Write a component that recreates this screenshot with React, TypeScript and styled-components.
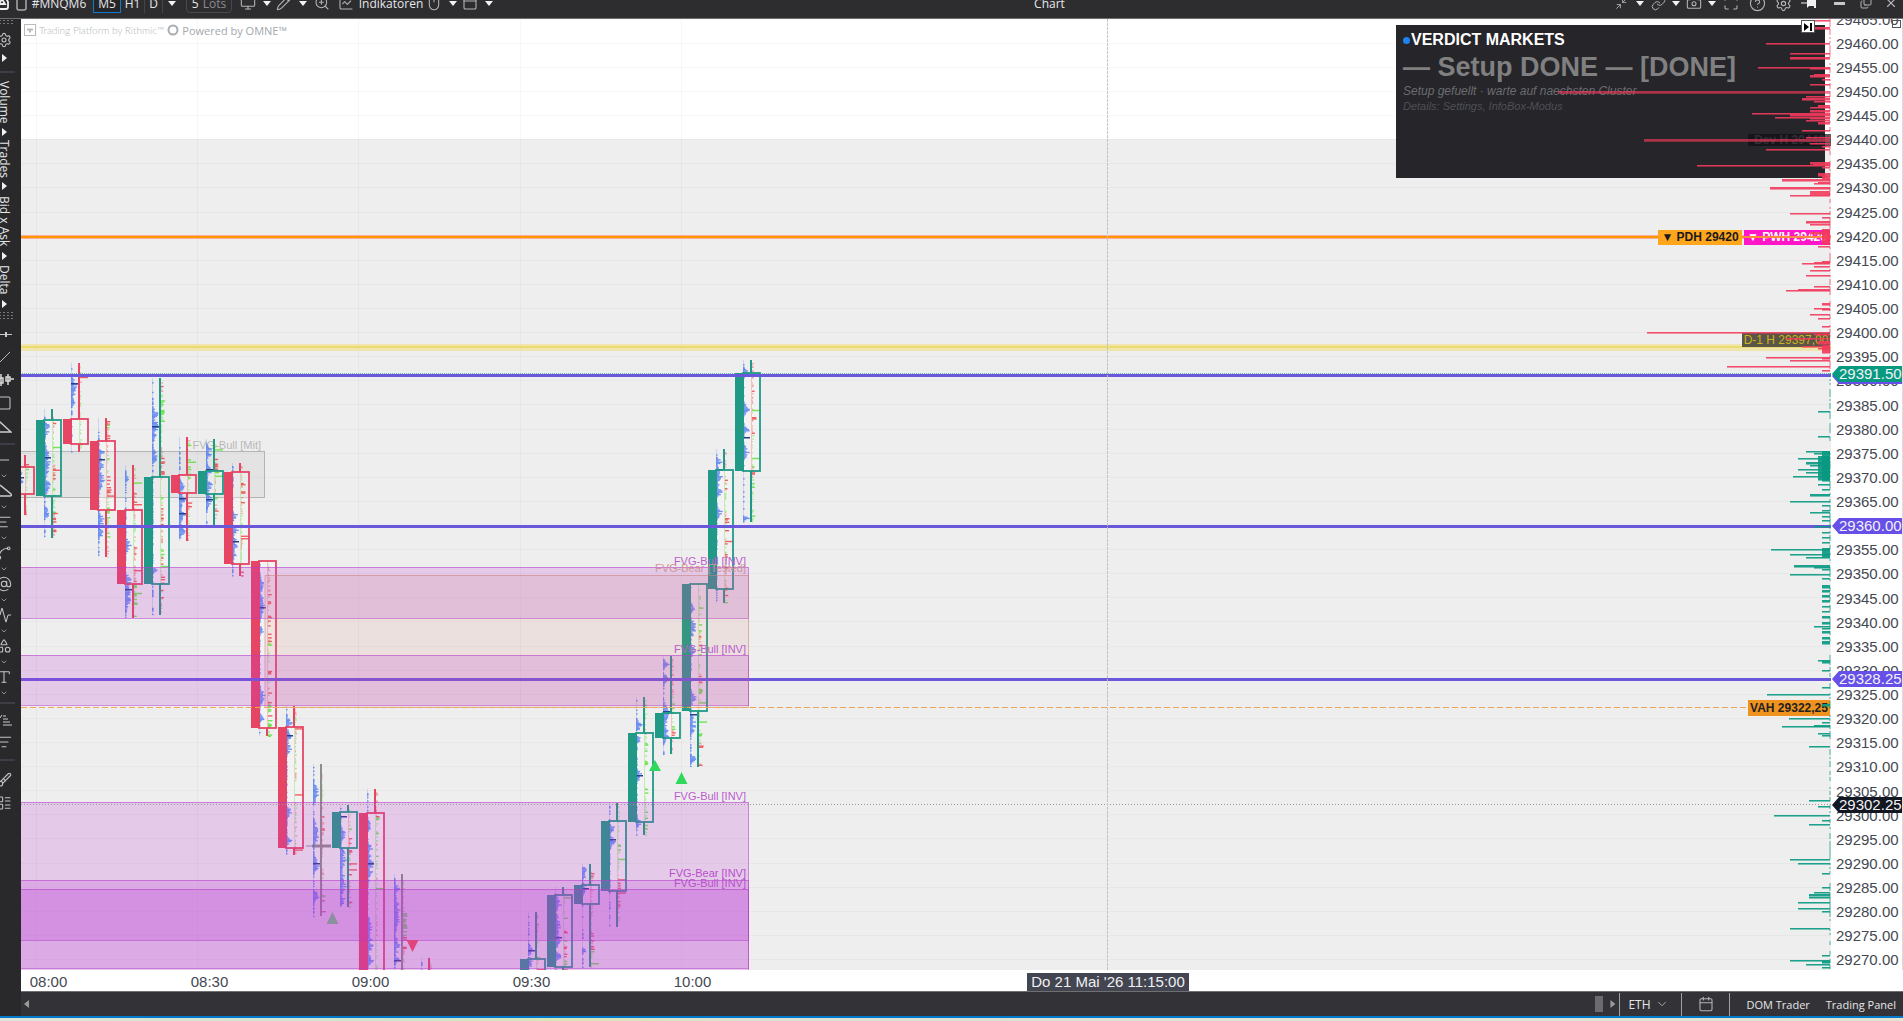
import React from 'react';
import styled, { createGlobalStyle } from 'styled-components';
import {
  Monitor, Pencil, ZoomIn, ChartLine, Mouse, PanelTop, Minimize2, Link, Camera, Maximize,
  CircleHelp, Settings, Minus, Copy, X, Calendar, ChevronDown, Square, Triangle, Type,
  Shapes, AlignLeft, Spline, AtSign, Slash, Activity, ListFilter, Brush, LayoutList,
} from 'lucide-react';

const ui = '"Open Sans", "Noto Sans", sans-serif';
const chartFont = '"Liberation Sans", Arial, sans-serif';

const Global = createGlobalStyle`
  * { box-sizing: border-box; }
  body { margin: 0; overflow: hidden; background: #2d2d30; }
  button { font: inherit; color: inherit; background: none; border: 0; padding: 0; }
`;

const Shell = styled.div`
  display: grid;
  grid-template-rows: 19px minmax(0, 1fr) 5px;
  height: 100vh;
  font-family: ${ui};
  font-size: 11px;
  color: #e6e6e8;
  background: #2d2d30;
`;

/* ---------- top bar ---------- */
const TopBar = styled.header`
  overflow: hidden;
  border-bottom: 1px solid #6f6f72;
  background: #2d2d30;
`;
const TopRow = styled.div`
  display: flex;
  align-items: center;
  height: 26px;
  margin-top: -10px;
  svg { color: #b4b4b6; }
`;
const Slot = styled.button<{ $w: number; $line?: boolean }>`
  display: flex;
  align-items: center;
  justify-content: center;
  flex: none;
  width: ${(p) => p.$w}px;
  height: 20px;
  white-space: nowrap;
  font-size: 12px;
  border-right: ${(p) => (p.$line ? '1px solid #45454a' : '0')};
`;
const ActiveSlot = styled(Slot)`
  margin-left: 4px;
  border: 1px solid #0a7bd0;
  background: #252528;
`;
const LotsSlot = styled(Slot)`
  margin: 0 4px 0 5px;
  border: 1px solid #48484e;
  border-radius: 4px;
  span { color: #8a8a8e; margin-left: 4px; }
`;
const Title = styled.div`
  flex: 1;
  padding-right: 10px;
  text-align: center;
  font-size: 12px;
`;
const Down = styled.i`
  border: 4px solid transparent;
  border-top: 5px solid #f2f2f2;
  border-bottom: 0;
`;

/* ---------- side bar ---------- */
const Body = styled.div`
  display: grid;
  grid-template-columns: 21px minmax(0, 1fr);
  min-height: 0;
`;
const Side = styled.nav`
  overflow: hidden;
  background: #29292c;
`;
const SideInner = styled.div`
  display: flex;
  flex-direction: column;
  width: 36px;
  margin-left: -14px;
`;
const SideSlot = styled.button<{ $h: number }>`
  display: flex;
  align-items: center;
  justify-content: center;
  flex: none;
  height: ${(p) => p.$h}px;
  svg { color: #c4c4c6; }
`;
const SideText = styled(SideSlot)`
  writing-mode: vertical-rl;
  width: 36px;
  font-size: 12px;
  line-height: 16px;
`;
const SideLine = styled.div<{ $h: number }>`
  display: flex;
  align-items: center;
  flex: none;
  height: ${(p) => p.$h}px;
  &::after { content: ''; width: 29px; height: 2px; background: #3d3d46; }
`;
const Dots = styled.div<{ $h: number }>`
  flex: none;
  height: ${(p) => p.$h}px;
  width: 27px;
  background-image: radial-gradient(circle, #77777a 1px, transparent 1px);
  background-size: 4px 3px;
  background-clip: content-box;
  padding: 1px 0 2px;
`;
const RightTri = styled.i`
  border: 4px solid transparent;
  border-left: 5px solid #f2f2f2;
  border-right: 0;
`;

/* ---------- chart ---------- */
const Work = styled.main`
  display: grid;
  grid-template-columns: minmax(0, 1fr) 72px;
  grid-template-rows: minmax(0, 1fr) 21px 25px;
  min-height: 0;
  background: #fff;
  font-family: ${chartFont};
`;
const Plot = styled.section`
  position: relative;
  overflow: hidden;
  background: linear-gradient(#fff 120px, #eee 120px);
`;
const Canvas = styled.svg`
  position: absolute;
  inset: 0;
  width: 100%;
  height: 100%;
  text { font-family: ${chartFont}; font-size: 11px; }
`;
const RightCanvas = styled.svg`
  position: absolute;
  top: 0;
  right: 0;
  width: 300px;
  height: 100%;
`;
const Watermark = styled.div`
  position: absolute;
  top: 3px;
  left: 3px;
  display: flex;
  align-items: center;
  gap: 3px;
  height: 16px;
  font-size: 10px;
  color: #b3b5b8;
  font-family: Inter, sans-serif;
  font-weight: 300;
`;
const Rithmic = styled.span`
  font-family: Lato, sans-serif;
`;
const Powered = styled.span`
  font-family: ${ui};
  font-weight: 400;
  font-size: 11px;
  color: #a3a8ad;
`;
const InfoBox = styled.aside`
  position: absolute;
  top: 6px;
  right: 6px;
  width: 429px;
  height: 153px;
  padding: 5px 7px;
  background: #25252a;
`;
const InfoTitle = styled.h2`
  display: flex;
  align-items: center;
  gap: 1px;
  margin: 0;
  font-size: 16px;
  line-height: 20px;
  color: #fff;
  &::before { content: ''; width: 7px; height: 7px; border-radius: 50%; background: #1e82f0; }
`;
const InfoState = styled.div`
  font-size: 27px;
  line-height: 34px;
  font-weight: 700;
  white-space: nowrap;
  color: #808080;
`;
const InfoNote = styled.div<{ $small?: boolean }>`
  font-style: italic;
  font-size: ${(p) => (p.$small ? 11 : 12)}px;
  line-height: 15px;
  color: ${(p) => (p.$small ? '#505055' : '#6c6c70')};
`;
const Tag = styled.div<{ $top: number; $right: number; $w: number; $bg: string; $fg: string; $plain?: boolean; $h?: number }>`
  position: absolute;
  top: ${(p) => p.$top}px;
  right: ${(p) => p.$right}px;
  width: ${(p) => p.$w}px;
  height: ${(p) => p.$h || 15}px;
  line-height: ${(p) => p.$h || 15}px;
  text-align: center;
  white-space: nowrap;
  font-size: 12px;
  font-weight: ${(p) => (p.$plain ? 400 : 700)};
  background: ${(p) => p.$bg};
  color: ${(p) => p.$fg};
`;
const SkipButton = styled.button`
  position: absolute;
  top: 1px;
  right: 16px;
  display: flex;
  width: 14px;
  height: 13px;
  align-items: center;
  justify-content: center;
  border: 1px solid #555;
  background: #fff;
`;
const Axis = styled.div`
  position: relative;
  display: flex;
  flex-direction: column;
  overflow: hidden;
  border-right: 1px solid #ddd;
  color: #444852;
`;
const AxisRows = styled.div`
  display: flex;
  flex: 1;
  flex-direction: column;
  margin: -12px 0 -2px;
`;
const Price = styled.div`
  display: flex;
  flex: 1;
  align-items: center;
  padding-left: 5px;
  font-size: 15px;
`;
const PriceTag = styled.div<{ $bg: string }>`
  position: absolute;
  left: 1px;
  width: 70px;
  height: 16px;
  padding-left: 7px;
  font-size: 15px;
  line-height: 16px;
  color: #f2f2f4;
  background: ${(p) => p.$bg};
  clip-path: polygon(0 50%, 7px 0, 100% 0, 100% 100%, 7px 100%);
`;
const AxisButton = styled.button`
  position: absolute;
  top: 1px;
  right: 1px;
  width: 9px;
  height: 8px;
  border: 1px solid #555;
`;
const TimeAxis = styled.div`
  position: relative;
  grid-column: 1 / -1;
  overflow: hidden;
  color: #444852;
`;
const TimeRow = styled.div`
  display: flex;
  margin-left: -53px;
`;
const Time = styled.div`
  flex: none;
  width: 161px;
  text-align: center;
  font-size: 15px;
  line-height: 24px;
`;
const CursorDate = styled.div`
  position: absolute;
  top: 3px;
  left: 1006px;
  width: 162px;
  height: 18px;
  text-align: center;
  font-size: 15px;
  line-height: 18px;
  color: #f0f0f2;
  background: #434651;
`;

/* ---------- footer ---------- */
const Footer = styled.footer`
  grid-column: 1 / -1;
  display: flex;
  align-items: center;
  padding: 0 7px 0 3px;
  border-top: 1px solid #6f6f72;
  background: #333337;
  font-family: ${ui};
  svg { color: #b4b4b6; }
`;
const Arrow = styled.button<{ $left?: boolean }>`
  width: 5px;
  height: 8px;
  background: #9a9a9c;
  clip-path: ${(p) => (p.$left ? 'polygon(100% 0, 100% 100%, 0 50%)' : 'polygon(0 0, 100% 50%, 0 100%)')};
`;
const Track = styled.div`
  flex: 1;
  display: flex;
  justify-content: flex-end;
  margin-right: 7px;
  &::after { content: ''; width: 8px; height: 16px; background: #6c6c6e; }
`;
const FootGroup = styled.div`
  display: flex;
  margin-left: 4px;
  border-right: 1px solid #a0a0a4;
`;
const FootButton = styled.button<{ $w: number; $start?: boolean }>`
  display: flex;
  align-items: center;
  justify-content: ${(p) => (p.$start ? 'flex-start' : 'center')};
  gap: 4px;
  width: ${(p) => p.$w}px;
  height: 23px;
  padding-left: ${(p) => (p.$start ? 8 : 0)}px;
  font-size: 12px;
  white-space: nowrap;
  border-left: 1px solid #a0a0a4;
`;
const FootLink = styled.button`
  font-size: 11px;
  margin-left: 16px;
  white-space: nowrap;
`;
const BlueStrip = styled.div`
  border-top: 2px solid #007acc;
  background: linear-gradient(90deg, #dfe4d8, #cfe6cb 22%, #dde6b4 30%, #e2e0d4 40%, #e4e2d0);
`;

/* ---------- data ---------- */
const G = '#209a86';
const R = '#e64564';
const N = '#8d8d8d';
const yOf = (p: number) => 43.7 + (29460 - p) * 4.823;

type Candle = {
  i: number; c: string; h: number; t: number; b: number; l: number;
  vol: [number, number][]; poc: number[];
};
const candles: Candle[] = [
  { i: 0, c: R, h: 455, t: 467, b: 494, l: 515, vol: [[478, 12]], poc: [477] },
  { i: 1, c: G, h: 409, t: 420, b: 496, l: 538, vol: [[425, 4], [432, 4], [462, 18], [485, 9], [512, 6]], poc: [457] },
  { i: 2, c: R, h: 363, t: 419, b: 444, l: 452, vol: [[387, 10], [402, 4]], poc: [383] },
  { i: 3, c: R, h: 418, t: 441, b: 510, l: 557, vol: [[452, 4], [463, 8], [480, 13], [520, 8], [532, 5]], poc: [459] },
  { i: 4, c: R, h: 465, t: 510, b: 584, l: 618, vol: [[478, 3], [545, 7], [580, 7], [595, 14]], poc: [589] },
  { i: 5, c: G, h: 378, t: 477, b: 584, l: 615, vol: [[413, 5], [427, 13], [455, 9], [570, 3]], poc: [426] },
  { i: 6, c: R, h: 437, t: 475, b: 493, l: 541, vol: [[485, 6], [500, 8], [514, 8], [530, 7]], poc: [498, 513] },
  { i: 7, c: G, h: 439, t: 471, b: 494, l: 525, vol: [[452, 7], [470, 6], [485, 8], [500, 9]], poc: [469, 499] },
  { i: 8, c: R, h: 463, t: 472, b: 564, l: 576, vol: [[515, 5], [530, 5], [547, 15]], poc: [541] },
  { i: 9, c: R, h: 561, t: 561, b: 728, l: 736, vol: [[585, 9], [605, 12], [630, 4], [697, 10], [718, 4]], poc: [607] },
  { i: 10, c: R, h: 706, t: 727, b: 848, l: 855, vol: [[722, 5], [735, 6], [747, 6], [812, 6], [840, 4]], poc: [735] },
  { i: 11, c: N, h: 764, t: 846, b: 846, l: 916, vol: [[792, 10], [833, 12], [865, 9], [896, 7]], poc: [863] },
  { i: 12, c: G, h: 805, t: 812, b: 848, l: 907, vol: [[835, 8], [858, 12], [883, 13], [900, 4]], poc: [816] },
  { i: 13, c: R, h: 789, t: 813, b: 985, l: 985, vol: [[825, 5], [847, 4], [866, 16], [925, 8], [942, 12], [960, 6]], poc: [863] },
  { i: 14, c: N, h: 874, t: 990, b: 990, l: 990, vol: [[888, 5], [912, 20], [945, 10], [960, 4]], poc: [960] },
  { i: 15, c: R, h: 958, t: 990, b: 990, l: 990, vol: [], poc: [] },
  { i: 19, c: G, h: 912, t: 959, b: 990, l: 990, vol: [[950, 6], [962, 5]], poc: [950] },
  { i: 20, c: G, h: 887, t: 895, b: 967, l: 985, vol: [[903, 7], [925, 12], [939, 9], [956, 5]], poc: [937] },
  { i: 21, c: G, h: 864, t: 885, b: 904, l: 967, vol: [[872, 7], [888, 5], [950, 2]], poc: [888] },
  { i: 22, c: G, h: 803, t: 821, b: 891, l: 927, vol: [[828, 4], [841, 7]], poc: [839] },
  { i: 23, c: G, h: 697, t: 733, b: 822, l: 835, vol: [[725, 5], [739, 3], [775, 6], [822, 5]], poc: [775] },
  { i: 24, c: G, h: 656, t: 713, b: 738, l: 754, vol: [[663, 5], [678, 5], [715, 13], [733, 9]], poc: [711] },
  { i: 25, c: G, h: 584, t: 584, b: 711, l: 767, vol: [[607, 5], [627, 10], [650, 6], [697, 7], [724, 10], [758, 4]], poc: [714] },
  { i: 26, c: G, h: 449, t: 470, b: 589, l: 603, vol: [[461, 3], [475, 9], [490, 7], [511, 7]], poc: [469] },
  { i: 27, c: G, h: 360, t: 373, b: 471, l: 522, vol: [[372, 4], [409, 6], [430, 4], [451, 7], [518, 3]], poc: [437] },
];

/* each entry: y, length, thickness */
const red: number[][] = [
  [20, 15], [27, 15, 2], [43, 64], [53, 40], [57, 40, 2], [67, 72], [68, 20], [74, 16], [75, 20, 2], [79, 8], [84, 20],
  [91, 272, 2], [96, 24], [98, 28, 2], [101, 16], [105, 12, 2], [107, 20], [110, 20, 2], [113, 78], [114, 40, 2],
  [117, 55], [118, 20], [120, 24], [122, 12, 2], [130, 28], [137, 24], [139, 186, 2], [143, 20], [146, 8], [149, 64],
  [162, 20, 2], [164, 17], [165, 133], [167, 8], [173, 12, 3], [176, 8, 3], [179, 48, 2], [182, 12], [183, 16],
  [187, 60, 2], [191, 20, 4], [195, 40], [213, 40], [217, 8], [221, 24, 2], [224, 20], [229, 8, 15], [232, 20, 2],
  [246, 12], [261, 8], [262, 16], [263, 28], [266, 16], [270, 20], [275, 24], [286, 16], [289, 32], [290, 44], [303, 8, 2],
  [308, 16], [309, 8], [314, 20], [318, 12], [326, 8], [332, 183], [334, 16], [338, 44], [341, 12, 3], [346, 28], [345, 8, 8],
  [348, 12], [357, 64], [358, 8], [360, 40], [366, 103], [370, 8],
];
const green: number[][] = [
  [411, 12], [436, 12], [451, 24], [453, 16], [458, 32], [456, 12, 24], [451, 8, 30], [462, 24, 2], [465, 20], [469, 32], [472, 24],
  [476, 37], [484, 12], [489, 8], [494, 20, 2], [501, 40], [505, 8], [510, 8], [512, 20], [516, 8], [520, 8], [526, 16],
  [532, 8], [537, 8], [542, 8], [549, 59], [548, 8, 9], [554, 40], [557, 24], [565, 36, 2], [567, 16], [569, 8],
  [574, 40], [578, 8], [585, 8, 3], [590, 8, 2], [595, 8, 2], [600, 8, 2], [606, 8], [611, 8], [616, 8, 2], [622, 8, 2],
  [626, 16], [628, 8], [631, 8, 2], [637, 8, 2], [641, 8, 3], [660, 12], [661, 8, 2], [670, 8], [687, 8], [694, 63],
  [704, 8, 2], [718, 41], [722, 8], [725, 16], [726, 48], [733, 12], [735, 8], [746, 21], [800, 21], [806, 12],
  [815, 56], [820, 8], [824, 21], [859, 40], [863, 32], [873, 8], [887, 8], [892, 16], [894, 21, 2], [897, 21],
  [902, 32], [908, 32], [911, 8], [928, 40], [955, 8], [960, 40], [961, 8, 2], [964, 24], [967, 8],
];

const rng = (seed: number) => () => {
  seed = (seed * 1664525 + 1013904223) % 4294967296;
  return seed / 4294967296;
};

function CandleMark({ k }: { k: Candle }) {
  const x = Math.round(25.3 + 26.89 * k.i);
  const rand = rng(k.i * 971 + 13);
  const flat = k.t === k.b;
  const rows: React.ReactNode[] = [];
  let tone = rand() > 0.5;
  let burst = 1;
  for (let y = k.h + 3; y < Math.min(k.l, 975); y += 1.2) {
    let v = rand() < 0.35 ? 1.6 : 0.8;
    k.vol.forEach(([c, s]) => {
      const d = (y - c) / s;
      v = Math.max(v, 7 * Math.exp(-d * d) * (0.35 + rand() * 0.65));
    });
    if (v > 1) rows.push(<rect key={`v${y}`} x={x - 8} y={y} width={Math.min(v, 7)} height={1.3} fill="#4a76f0" opacity={0.78} />);
    if (rand() < 0.14) tone = rand() > 0.5;
    if (rand() < 0.12) burst = rand() * 3;
    if (rand() < 0.5) {
      const w = rand() < 0.02 ? 8 : 0.8 + rand() * burst * 1.4;
      rows.push(<rect key={`d${y}`} x={x + 1} y={y} width={w} height={1.4} fill={tone ? '#5be238' : '#f0464a'} opacity={w > 2.5 ? 0.85 : 0.4} />);
    }
  }
  return (
    <g>
      <rect x={x - 8} y={k.h} width={1} height={k.l - k.h} fill="#7fa5f5" opacity={0.35} />
      {flat ? (
        <>
          <rect x={x - 15} y={k.t - 0.5} width={7} height={1} fill={k.c} />
          <rect x={x - 9} y={k.t - 1.5} width={19} height={3} fill={k.c} />
        </>
      ) : (
        <>
          <rect x={x - 16} y={k.t} width={9} height={k.b - k.t} fill={k.c} />
          <rect x={x - 7} y={k.t} width={16} height={k.b - k.t} fill="#fff" opacity={0.3} />
          <rect x={x} y={k.t} width={1} height={k.b - k.t} fill={k.i % 3 ? '#8be070' : '#e88'} opacity={0.45} />
        </>
      )}
      {rows}
      {k.h < k.t && <rect x={x - 1} y={k.h} width={2} height={k.t - k.h} fill={k.c} />}
      {k.l > k.b && <rect x={x - 1} y={k.b} width={2} height={k.l - k.b} fill={k.c} />}
      {k.poc.map((p) => <rect key={p} x={x - 8} y={p} width={7} height={1.5} fill="#26418f" />)}
      {!flat && <rect x={x - 8} y={k.t} width={17} height={k.b - k.t} fill="none" stroke={k.c} strokeWidth={1.8} />}
    </g>
  );
}

const purple = '#b43ccc';
const zones = [
  { x: 0, y: 567, b: 618, f: '#bc35d5', o: 0.2, s: purple },
  { x: 265, y: 575, b: 707, f: '#d27864', o: 0.12, s: '#c98080' },
  { x: 0, y: 655, b: 705, f: '#bc35d5', o: 0.2, s: purple },
  { x: 0, y: 802, b: 968, f: '#bc35d5', o: 0.2, s: purple },
  { x: 0, y: 880, b: 980, f: '#bc35d5', o: 0.2, s: purple },
  { x: 0, y: 889, b: 940, f: '#bc35d5', o: 0.22, s: purple },
];
const notes: [string, number, string][] = [
  ['FVG-Bull [INV]', 565, '#bd5bcf'],
  ['FVG-Bear [Tested]', 572, '#d09494'],
  ['FVG-Bull [INV]', 653, '#bd5bcf'],
  ['FVG-Bull [INV]', 800, '#bd5bcf'],
  ['FVG-Bear [INV]', 877, '#b94fcc'],
  ['FVG-Bull [INV]', 887, '#b94fcc'],
];

function ChartCanvas() {
  const prices = Array.from({ length: 40 }, (_, n) => 29465 - n * 5);
  return (
    <Canvas role="img" aria-label="MNQM6 M5">
      <g transform="translate(-21 -19)">
        {prices.map((p) => <rect key={p} x={0} y={Math.round(yOf(p)) - 1} width="110%" height={1} fill="#000" opacity={0.028} />)}
        {[36, 197, 358, 520, 681].map((x) => <rect key={x} x={x} y={0} width={1} height="110%" fill="#000" opacity={0.03} />)}
        <rect x={10} y={451.5} width={254.5} height={46} fill="#000" opacity={0.045} />
        <rect x={10} y={451.5} width={254.5} height={46} fill="none" stroke="#b4b4b4" />
        <text x={261} y={449} textAnchor="end" fill="#b8b8b8">FVG-Bull [Mit]</text>
        {candles.map((k) => <CandleMark key={k.i} k={k} />)}
        <rect x={0} y={344} width="110%" height={7} fill="#f0e296" opacity={0.75} />
        <rect x={0} y={346} width="110%" height={2} fill="#ecdc70" />
        <rect x={0} y={235} width="110%" height={4} fill="#ff9c85" opacity={0.8} />
        <rect x={0} y={236} width="110%" height={2} fill="#ff9800" />
        <line x1={0} x2="110%" y1={373.5} y2={373.5} stroke="#209a86" strokeDasharray="1 1" opacity={0.6} />
        {[374, 525, 678].map((y) => <rect key={y} x={0} y={y} width="110%" height={3} fill="#6a58dc" />)}
        {zones.map((z) => (
          <g key={z.y}>
            <rect x={z.x} y={z.y} width={748.5 - z.x} height={z.b - z.y} fill={z.f} opacity={z.o} />
            <rect x={z.x} y={z.y + 0.5} width={748.5 - z.x} height={z.b - z.y} fill="none" stroke={z.s} opacity={0.55} />
          </g>
        ))}
        <line x1={21} x2="110%" y1={707.5} y2={707.5} stroke="#f2a552" strokeDasharray="6 3" />
        {notes.map(([t, y, c]) => <text key={y} x={746} y={y} textAnchor="end" fill={c}>{t}</text>)}
        <path d="M332.500 912l6 12h-12z" fill="#8a909e" />
        <path d="M406.500 940h12l-6 12z" fill="#e0457f" />
        <path d="M655 760l6 11h-12zM681.500 772l6 12h-12z" fill="#30d95c" />
        <line x1={21} x2="110%" y1={804.5} y2={804.5} stroke="#999" strokeDasharray="1 2" />
        <line x1={1107.5} x2={1107.5} y1={19} y2="110%" stroke="#c2c2c2" strokeDasharray="3 1" />
      </g>
    </Canvas>
  );
}

function VolumeProfile() {
  const rand = rng(77);
  const bars = (list: number[][], fill: string) =>
    list.map(([y, w, h = 1], n) => (
      <g key={n} fill={fill}>
        <rect x={299 - w} y={y - 19} width={w} height={h + 1} opacity={0.5} />
        <rect x={299 - w} y={y - 19} width={w} height={h} opacity={w > 150 && y < 300 ? 0.3 : 0.8} />
      </g>
    ));
  const ticks = [];
  for (let y = 0; y < 950; y += 2) {
    if (rand() < 0.6) ticks.push(<rect key={y} x={298} y={y} width={2} height={2} fill={y < 352 ? '#f23a5c' : '#089981'} opacity={0.35} />);
  }
  return (
    <RightCanvas aria-hidden="true">
      <rect x={212} y={217} width={88} height={2} fill="#ff8a3c" />
      {ticks}
      {bars(red, '#f23a5c')}
      {bars(green, '#089981')}
    </RightCanvas>
  );
}

const Caret = ({ w, label }: { w: number; label: string }) => <Slot $w={w} aria-label={label}><Down /></Slot>;

const tools: [React.ComponentType<any>, string][] = [
  [Minus, 'Linien'], [Triangle, 'Formen'], [AlignLeft, 'Profile'], [Spline, 'Kurven'],
  [AtSign, 'Spirale'], [Activity, 'Wellen'], [Shapes, 'Objekte'], [Type, 'Text'],
];
const modes: [string, number][] = [['Volume', 46], ['Trades', 40], ['Bid x Ask', 56], ['Delta', 34]];
const priceTags: [string, number, string][] = [
  ['', 349, '#6650e8'], ['29391.50', 347, '#089981'], ['29360.00', 499, '#6650e8'],
  ['29328.25', 652, '#6650e8'], ['29302.25', 778, '#131722'],
];

export default function App() {
  const s = { size: 16, strokeWidth: 1.6 };
  const axisPrices = Array.from({ length: 40 }, (_, n) => (29465 - n * 5).toFixed(2));
  return (
    <Shell>
      <Global />
      <TopBar>
        <TopRow>
          <Slot $w={14} aria-label="Start">
            <svg width="14" height="16" fill="none" stroke="#f0f0f0" strokeWidth="1.8"><path d="M1 1h4l3 6v5q0 2-2 2H-2M-1 9h6l-3-5z" /></svg>
          </Slot>
          <Slot $w={15} aria-label="Workspace">
            <svg width="12" height="16" fill="none" stroke="#aaa" strokeWidth="1.5"><rect x="1" y="1" width="9" height="14" rx="2" /></svg>
          </Slot>
          <Slot $w={60}>#MNQM6</Slot>
          <ActiveSlot $w={28}>M5</ActiveSlot>
          <Slot $w={24} $line>H1</Slot>
          <Slot $w={18} $line>D</Slot>
          <Caret w={18} label="Zeitrahmen" />
          <LotsSlot $w={46}>5<span>Lots</span></LotsSlot>
          <Slot $w={24} aria-label="Ansicht"><Monitor {...s} /></Slot>
          <Caret w={14} label="Ansicht wählen" />
          <Slot $w={20} aria-label="Zeichnen"><Pencil {...s} /></Slot>
          <Caret w={18} label="Zeichenwerkzeuge" />
          <Slot $w={20} aria-label="Zoom"><ZoomIn {...s} /></Slot>
          <Slot $w={28} aria-label="Studien"><ChartLine {...s} /></Slot>
          <Slot $w={62}>Indikatoren</Slot>
          <Slot $w={24} aria-label="Maus"><Mouse {...s} /></Slot>
          <Caret w={14} label="Mausmodus" />
          <Slot $w={20} aria-label="Layout"><PanelTop {...s} /></Slot>
          <Caret w={18} label="Layout wählen" />
          <Title>Chart</Title>
          <Slot $w={20} aria-label="Verkleinern"><Minimize2 {...s} size={13} /></Slot>
          <Caret w={18} label="Größe" />
          <Slot $w={18} aria-label="Verknüpfen"><Link {...s} size={15} /></Slot>
          <Caret w={18} label="Verknüpfung" />
          <Slot $w={18} aria-label="Foto"><Camera {...s} /></Slot>
          <Caret w={18} label="Fotooptionen" />
          <Slot $w={20} aria-label="Vollbild"><Maximize {...s} /></Slot>
          <Slot $w={32} aria-label="Hilfe"><CircleHelp {...s} size={17} /></Slot>
          <Slot $w={20} aria-label="Einstellungen"><Settings {...s} size={17} /></Slot>
          <Slot $w={32} aria-label="Anheften">
            <svg width="16" height="10"><path d="M0 4.500h6V0l2 2h5V0h2v10h-2V8H8L6 10V5.500H0z" fill="#f0f0f0" /></svg>
          </Slot>
          <Slot $w={28} aria-label="Minimieren"><svg width="11" height="3"><rect width="11" height="3" fill="#c8c8c8" /></svg></Slot>
          <Slot $w={26} aria-label="Fenster"><Copy size={12} strokeWidth={2} style={{ transform: 'scaleY(-1)' }} /></Slot>
          <Slot $w={24} aria-label="Schließen"><X size={14} strokeWidth={2} /></Slot>
        </TopRow>
      </TopBar>

      <Body>
        <Side>
          <SideInner>
            <Dots $h={9} />
            <SideSlot $h={23} aria-label="Optionen"><Settings {...s} /></SideSlot>
            <SideSlot $h={14} aria-label="Mehr"><RightTri /></SideSlot>
            <SideLine $h={14} />
            {modes.map(([m, h]) => (
              <React.Fragment key={m}>
                <SideText $h={h}>{m}</SideText>
                <SideSlot $h={14} aria-label={`${m} wählen`}><RightTri /></SideSlot>
              </React.Fragment>
            ))}
            <Dots $h={12} />
            <SideSlot $h={23} aria-label="Horizontale">
              <svg width="16" height="6" fill="#ccc"><rect y="2" width="16" height="1" /><rect x="9" width="2" height="5" /></svg>
            </SideSlot>
            <SideSlot $h={23} aria-label="Trendlinie"><Slash {...s} size={14} /></SideSlot>
            <SideSlot $h={22} aria-label="Kerzen">
              <svg width="20" height="14" fill="none" stroke="#d8d8d8" strokeWidth="1.5"><path d="M7 1v12M14 1v11M5 5h4v5H5zM12 4h4v4h-4zM0 7h5M16 6h4" /></svg>
            </SideSlot>
            <SideSlot $h={24} aria-label="Rechteck"><Square {...s} /></SideSlot>
            <SideSlot $h={23} aria-label="Dreieck">
              <svg width="16" height="14" fill="none" stroke="#ccc" strokeWidth="1.5"><path d="M3 1l12 11H1" /></svg>
            </SideSlot>
            <SideLine $h={12} />
            {tools.map(([Icon, name]) => (
              <React.Fragment key={name}>
                <SideSlot $h={20} aria-label={name}>
                  {name === 'Formen'
                    ? <svg width="18" height="14" fill="none" stroke="#ccc" strokeWidth="1.5"><path d="M5 1l11 9q1 2-1 2H1" /></svg>
                    : <Icon {...s} />}
                </SideSlot>
                <SideSlot $h={11} aria-label={`${name} wählen`}><ChevronDown size={8} strokeWidth={2} /></SideSlot>
              </React.Fragment>
            ))}
            <SideLine $h={10} />
            <SideSlot $h={24} aria-label="Sortieren">
              <svg width="16" height="14" fill="none" stroke="#ccc"><path d="M7 3h3M7 6h5M7 9h7M7 12h9M1 9l5-7" /></svg>
            </SideSlot>
            <SideSlot $h={20} aria-label="Filter"><ListFilter {...s} /></SideSlot>
            <SideLine $h={16} />
            <SideSlot $h={24} aria-label="Stil"><Brush {...s} /></SideSlot>
            <SideSlot $h={22} aria-label="Liste"><LayoutList {...s} /></SideSlot>
          </SideInner>
        </Side>

        <Work>
          <Plot>
            <ChartCanvas />
            <Watermark>
              <svg width="12" height="12" fill="none" stroke="#bbb"><rect x="0.5" y="0.5" width="11" height="11" /><path d="M3 5.500h6M5 7.500h2" strokeWidth="2" /></svg>
              <Rithmic>Trading Platform by Rithmic™</Rithmic>
              <svg width="12" height="12" fill="none" stroke="#a8adb2" strokeWidth="2"><circle cx="6" cy="6" r="4.500" /></svg>
              <Powered>Powered by OMNE™</Powered>
            </Watermark>
            <InfoBox>
              <InfoTitle>VERDICT MARKETS</InfoTitle>
              <InfoState>— Setup DONE — [DONE]</InfoState>
              <InfoNote>Setup gefuellt · warte auf naechsten Cluster</InfoNote>
              <InfoNote $small>Details: Settings, InfoBox-Modus</InfoNote>
            </InfoBox>
            <Tag $top={115} $right={0} $w={83} $h={12} $bg="rgba(18,14,20,0.7)" $fg="#302e36">Dev H 29440</Tag>
            <Tag $top={211} $right={89} $w={84} $bg="#ffa61c" $fg="#1a1a1a">▼ PDH 29420</Tag>
            <Tag $top={211} $right={1} $w={86} $bg="#ff16c8" $fg="#fff">▼ PWH 29420</Tag>
            <Tag $top={314} $right={1} $w={88} $h={14} $bg="#5a5546" $fg="#cdb21c" $plain>D-1 H 29397,00</Tag>
            <Tag $top={681} $right={1} $w={82} $h={16} $bg="#f0921e" $fg="#222">VAH 29322,25</Tag>
            <VolumeProfile />
            <SkipButton aria-label="Zum Ende"><svg width="8" height="8"><path d="M0 0l5 4-5 4zM6 0h2v8H6z" /></svg></SkipButton>
          </Plot>
          <Axis>
            <AxisRows>{axisPrices.map((p) => <Price key={p}>{p}</Price>)}</AxisRows>
            {priceTags.map(([t, y, bg]) => <PriceTag key={y} $bg={bg} style={{ top: y }}>{t}</PriceTag>)}
            <AxisButton aria-label="Skalierung" />
          </Axis>
          <TimeAxis>
            <TimeRow>{['08:00', '08:30', '09:00', '09:30', '10:00'].map((t) => <Time key={t}>{t}</Time>)}</TimeRow>
            <CursorDate>Do 21 Mai '26 11:15:00</CursorDate>
          </TimeAxis>
          <Footer>
            <Arrow $left aria-label="Zurück" />
            <Track />
            <Arrow aria-label="Vor" />
            <FootGroup>
              <FootButton $w={62} $start>ETH <ChevronDown size={14} strokeWidth={1.5} /></FootButton>
              <FootButton $w={48} aria-label="Kalender"><Calendar {...s} /></FootButton>
            </FootGroup>
            <FootLink>DOM Trader</FootLink>
            <FootLink>Trading Panel</FootLink>
          </Footer>
        </Work>
      </Body>
      <BlueStrip />
    </Shell>
  );
}
